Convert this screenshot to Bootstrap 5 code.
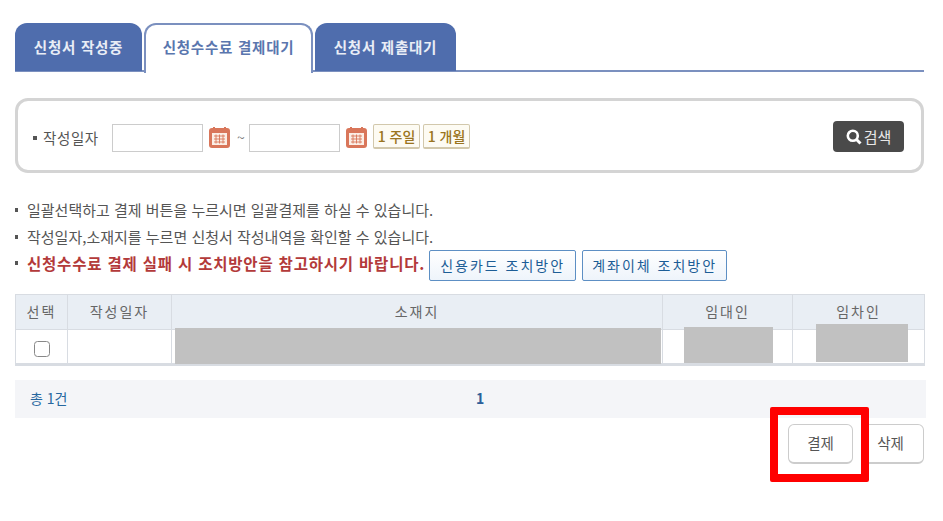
<!DOCTYPE html>
<html lang="ko">
<head>
<meta charset="utf-8">
<title>신청서</title>
<link href="https://cdn.jsdelivr.net/npm/bootstrap@5.3.0/dist/css/bootstrap.min.css" rel="stylesheet">
<style>
html,body{height:100%}
body{font-family:"Noto Sans CJK KR","Liberation Sans",sans-serif;font-size:14px;color:#555;background:#fff;overflow:hidden}
.page-wrap{width:909px;margin-left:15px;padding-top:23px;position:relative}
.tab-strip{border-bottom:2px solid #7b90bf;height:49px;gap:2px;flex-wrap:nowrap}
.tab-strip .nav-link{height:48px;margin:0;border:0;border-radius:12px 12px 0 0;background:#4f6dad;color:#e9edf6;font-weight:700;font-size:14.5px;letter-spacing:.75px;line-height:47px;padding:0;text-align:center}
.tab-strip .nav-item:nth-child(1) .nav-link{width:127px}
.tab-strip .nav-item:nth-child(2) .nav-link{width:169px}
.tab-strip .nav-item:nth-child(3) .nav-link{width:141px}
.tab-strip .nav-link.active{background:#fff;color:#5a76ae;border:2px solid #7b90bf;border-bottom:0;height:50px;line-height:44px;margin-bottom:-2px}
.search-box{margin-top:26px;height:75px;border:3px solid #d4d4d4;border-radius:13px;padding:4px 17px 0 15px}
.field-label{width:79px;font-size:14.5px;letter-spacing:.6px;color:#555;white-space:nowrap;display:flex;align-items:center}
.field-label::before{content:"";width:4px;height:4px;background:#555;margin-right:6px;flex:none}
.date-input{width:91px;height:28px;border:1px solid #ccc;background:#fff;padding:0;border-radius:0}
.cal-icon{width:21px;height:21px;display:block}
.cal-gap{margin:0 6px}
.tilde{width:12px;font-size:14px;color:#777;margin-left:1px}
.gold-btn{height:25px;margin-top:-2px;padding:0;border:1px solid #d2c8ac;border-bottom-width:2px;background:#fdfbf3;color:#9a7420;font-size:14px;font-weight:500;border-radius:2px;line-height:21px;width:47px;white-space:nowrap}
.gold-btn + .gold-btn{margin-left:3px}
.dark-btn{width:71px;height:31px;margin-top:-2px;padding:0;background:#4a4a4a;color:#e8e8e8;border:0;border-radius:4px;font-size:15px;line-height:31px;gap:2px}
.notes{margin:24px 0 0;padding:0;list-style:none;font-size:15px;color:#555}
.notes li{height:26.5px;display:flex;align-items:center;white-space:nowrap}
.notes li::before{content:"";width:3px;height:4px;background:#555;margin-right:9px;flex:none}
.notes .warn{color:#b33a3a;font-weight:700;margin-right:4px;font-size:15.5px;letter-spacing:.8px}
.help-btn{height:31px;margin-top:4px;padding:0;width:147px;background:linear-gradient(#fff,#eef4fb);border:1px solid #5d8fc4;color:#1c5d96;font-size:14px;letter-spacing:2px;border-radius:2px;line-height:28px}
.help-btn + .help-btn{width:145px;margin-left:6px}
.grid-wrap{margin-top:17px;position:relative}
.data-grid{margin:0;table-layout:fixed;width:909px;border-color:#d8dce2;border:1px solid #d8dce2;border-bottom:3px solid #d8dce2}
.data-grid th,.data-grid td{padding:0;text-align:center;vertical-align:middle;border:0;border-right:1px solid #d8dce2;box-shadow:none;position:relative}
.data-grid th{height:35px;background:#e9eef4;font-weight:400;font-size:14px;color:#666;letter-spacing:2px;border-bottom:1px solid #d8dce2}
.data-grid td{height:35px;background:#fff}
.chk{width:16px;height:16px;margin:5px 0 0;border:1.5px solid #888;border-radius:3px}
.redact{position:absolute;background:#c1c1c1}
.r1{left:3px;top:-2px;width:486px;height:36px}
.r2{left:21px;top:-3px;width:89px;height:36px}
.r3{left:23px;top:-6px;width:92px;height:38px}
.pager-bar{margin-top:14px;height:38px;width:911px;background:#f4f5f8;padding-left:15px;color:#27679f;font-size:14px}
.pager-count{width:446px}
.pager-num{font-weight:700;color:#2d5f9a}
.action-row{margin-top:6px;gap:8px}
.act-btn{width:65px;height:40px;padding:0;background:#fff;border:1px solid #ccc;border-bottom-width:2px;border-radius:6px;color:#555;font-size:14.5px}
.act-btn + .act-btn{width:63px;padding-right:4px}
.red-mark{position:absolute;left:755px;top:407px;width:99px;height:75px;border:8px solid #f00;border-radius:2px;pointer-events:none}
</style>
</head>
<body>
<div class="page-wrap">
  <ul class="nav nav-tabs tab-strip">
    <li class="nav-item"><a class="nav-link" href="#">신청서 작성중</a></li>
    <li class="nav-item"><a class="nav-link active" href="#">신청수수료 결제대기</a></li>
    <li class="nav-item"><a class="nav-link" href="#">신청서 제출대기</a></li>
  </ul>

  <div class="search-box d-flex align-items-center">
    <span class="field-label">작성일자</span>
    <input class="date-input" type="text" aria-label="시작일">
    <span class="cal-gap"><svg class="cal-icon" viewBox="0 0 21 21"><rect width="21" height="20" y="1" rx="3" fill="#d9765a"/><rect x="3" y="6" width="15" height="12" fill="#fbeee6"/><path d="M5 0v4M16 0v4" stroke="#d9765a" stroke-width="2"/><path d="M5 9h11M5 12h11M5 15h11M7 7.500v9M10.500 7.500v9M14 7.500v9" stroke="#d9765a" stroke-width=".9"/></svg></span>
    <span class="tilde">~</span>
    <input class="date-input" type="text" aria-label="종료일">
    <span class="cal-gap"><svg class="cal-icon" viewBox="0 0 21 21"><rect width="21" height="20" y="1" rx="3" fill="#d9765a"/><rect x="3" y="6" width="15" height="12" fill="#fbeee6"/><path d="M5 0v4M16 0v4" stroke="#d9765a" stroke-width="2"/><path d="M5 9h11M5 12h11M5 15h11M7 7.500v9M10.500 7.500v9M14 7.500v9" stroke="#d9765a" stroke-width=".9"/></svg></span>
    <button class="btn gold-btn" type="button">1 주일</button>
    <button class="btn gold-btn" type="button">1 개월</button>
    <button class="btn dark-btn ms-auto d-flex align-items-center justify-content-center" type="button"><svg width="16" height="16" viewBox="0 0 16 16"><circle cx="6.800" cy="6.800" r="5" fill="none" stroke="#fff" stroke-width="2.600"/><path d="M10.500 10.500l4 4" stroke="#fff" stroke-width="3"/></svg>검색</button>
  </div>

  <ul class="notes">
    <li>일괄선택하고 결제 버튼을 누르시면 일괄결제를 하실 수 있습니다.</li>
    <li>작성일자,소재지를 누르면 신청서 작성내역을 확인할 수 있습니다.</li>
    <li><span class="warn">신청수수료 결제 실패 시 조치방안을 참고하시기 바랍니다.</span><button class="btn help-btn" type="button">신용카드 조치방안</button><button class="btn help-btn" type="button">계좌이체 조치방안</button></li>
  </ul>

  <div class="grid-wrap">
    <table class="table data-grid">
      <colgroup><col style="width:52px"><col style="width:104px"><col style="width:491px"><col style="width:130px"><col style="width:132px"></colgroup>
      <thead><tr><th>선택</th><th>작성일자</th><th>소재지</th><th>임대인</th><th>임차인</th></tr></thead>
      <tbody><tr>
        <td><input class="form-check-input chk" type="checkbox" aria-label="선택"></td>
        <td></td>
        <td><span class="redact r1"></span></td>
        <td><span class="redact r2"></span></td>
        <td><span class="redact r3"></span></td>
      </tr></tbody>
    </table>
  </div>

  <div class="pager-bar d-flex align-items-center">
    <span class="pager-count">총 1건</span>
    <span class="pager-num">1</span>
  </div>

  <div class="action-row d-flex justify-content-end">
    <button class="btn act-btn" type="button">결제</button>
    <button class="btn act-btn" type="button">삭제</button>
  </div>
  <div class="red-mark"></div>
</div>
<script src="https://cdn.jsdelivr.net/npm/bootstrap@5.3.0/dist/js/bootstrap.bundle.min.js"></script>
</body>
</html>
